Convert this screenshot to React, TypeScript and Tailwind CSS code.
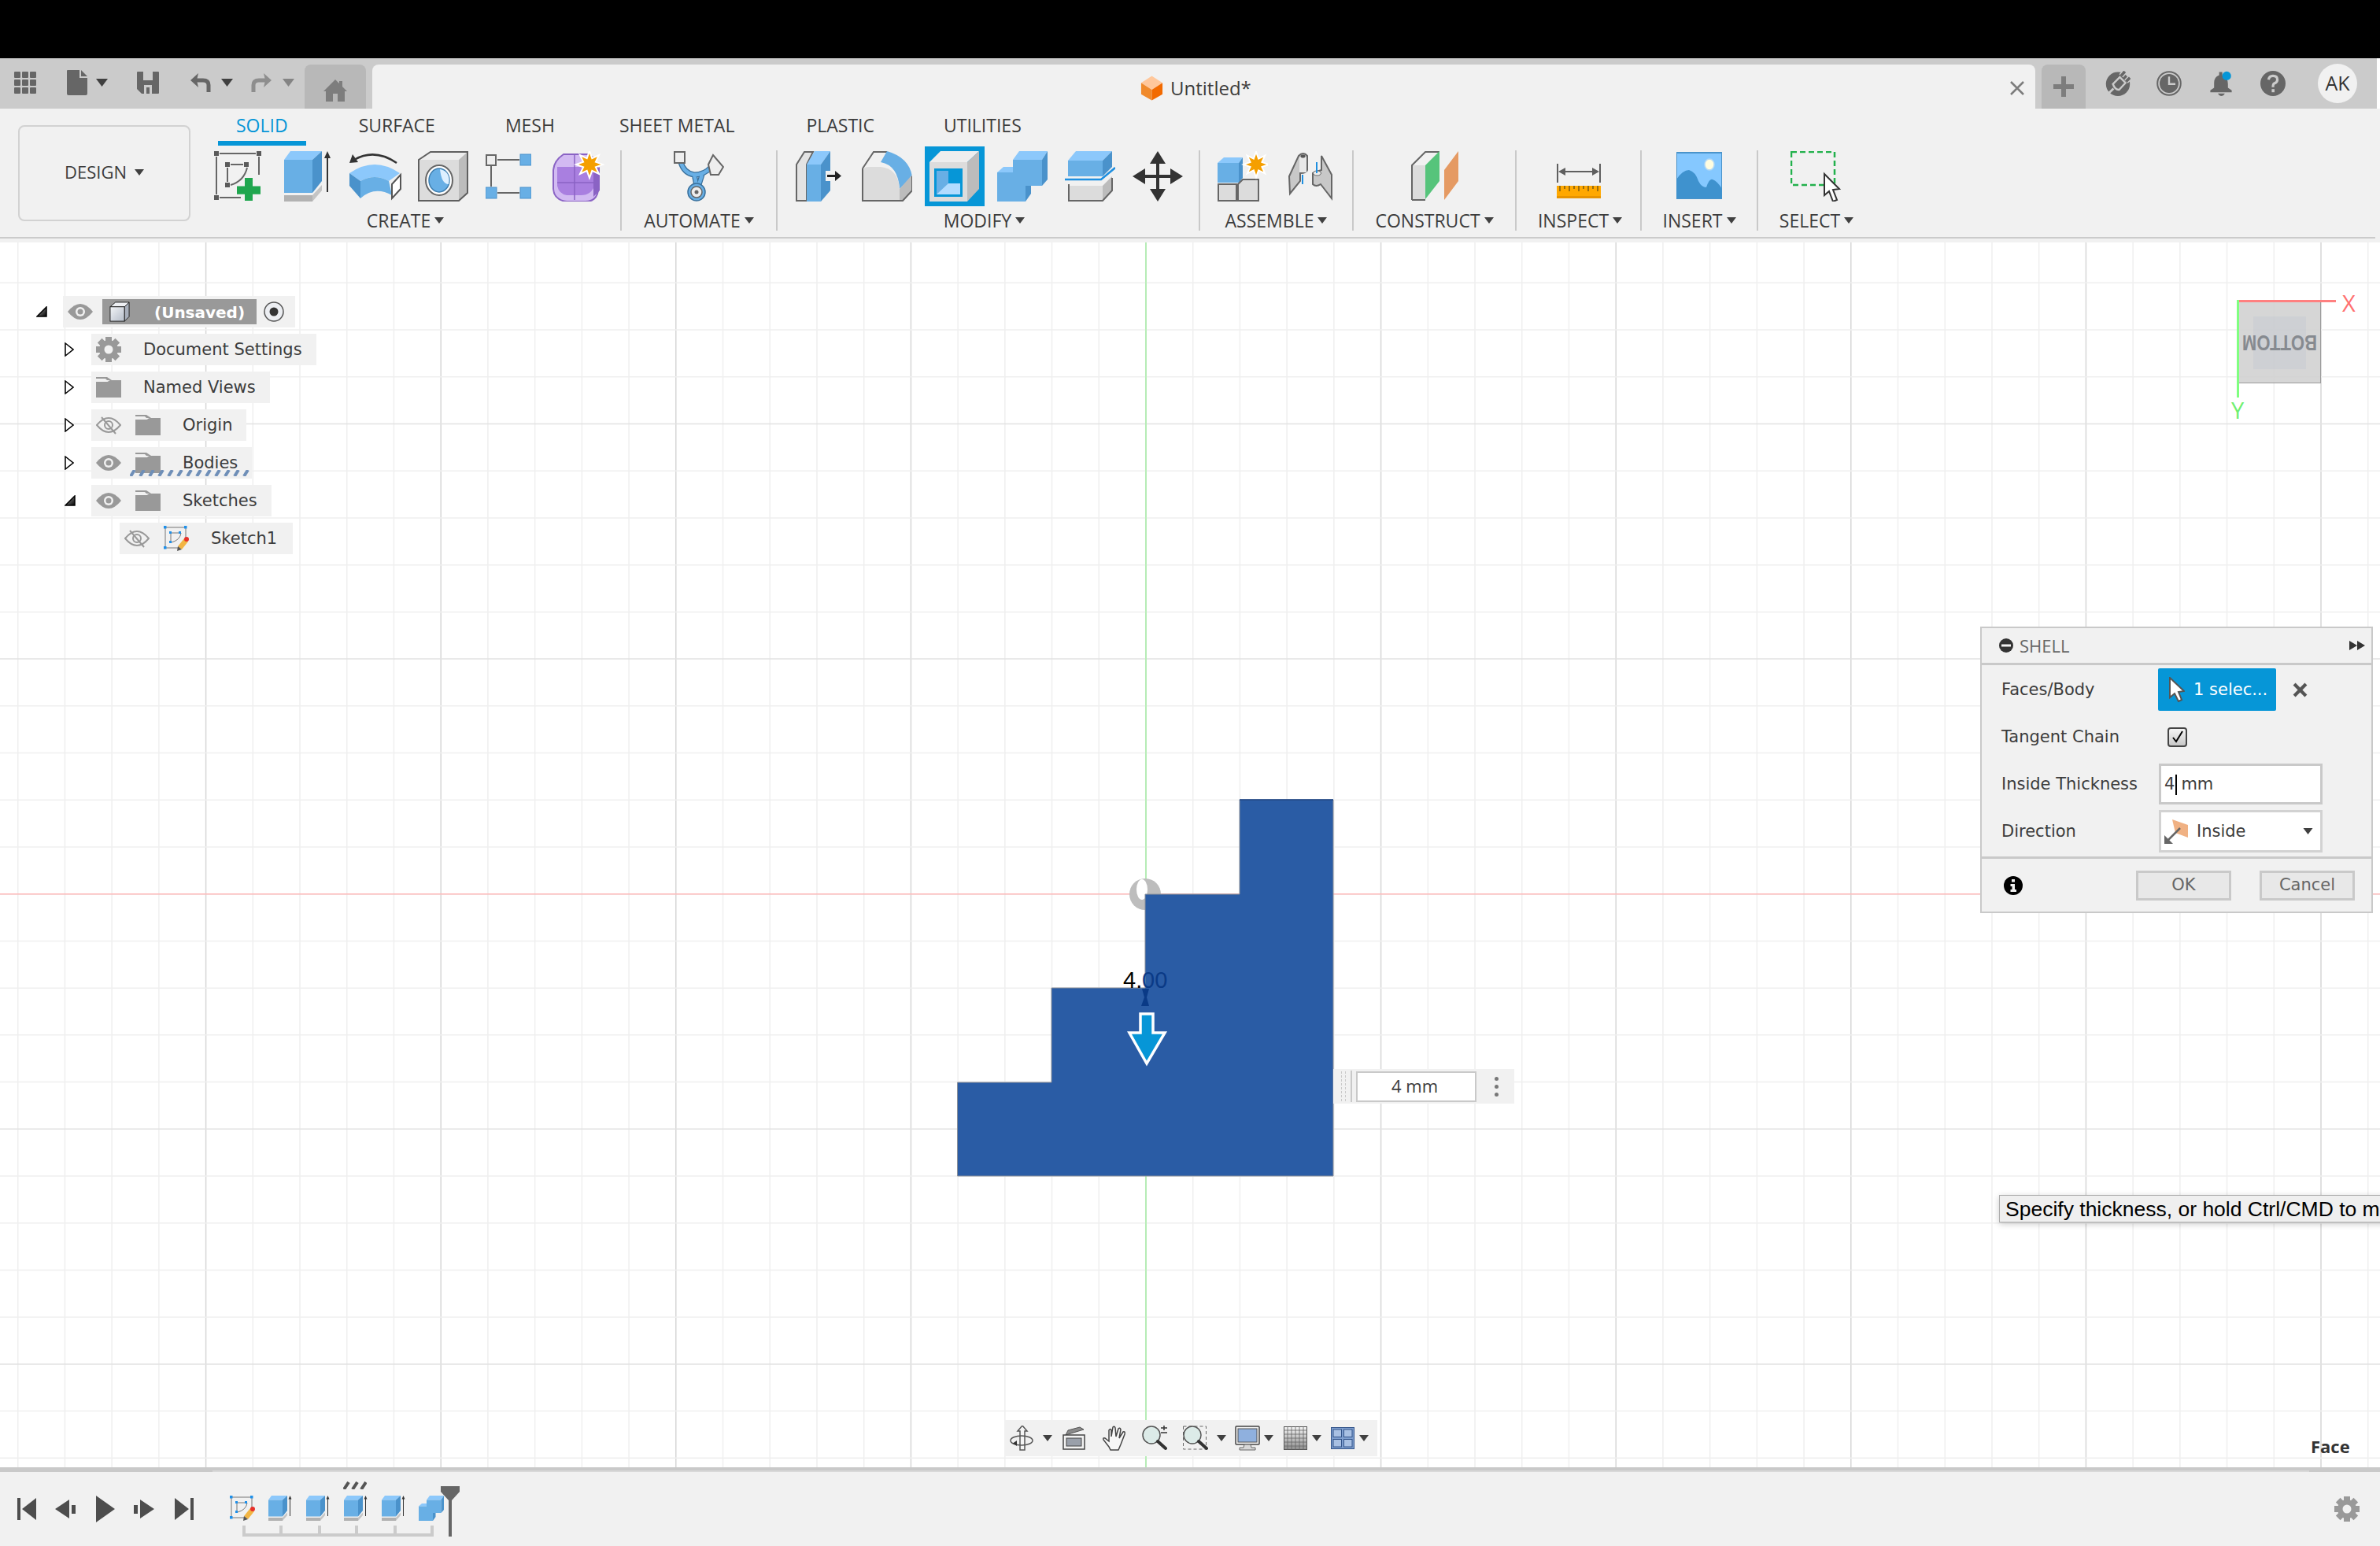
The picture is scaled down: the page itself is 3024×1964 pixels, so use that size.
import React from 'react';

type IconProps = { className?: string };

const BLUE = '#68afe5';
const BLUE_TOP = '#8cc8fb';
const BLUE_SIDE = '#4a92cb';

const Caret = ({ className = 'w-[12px] h-[8px]' }: IconProps) => (
  <svg viewBox="0 0 12 8" className={className}>
    <path d="M0 0H12L6 8Z" fill="#404040" />
  </svg>
);

/* ---------- quick access bar ---------- */
const GridIcon = () => (
  <svg viewBox="0 0 28 28" className="w-[28px] h-[28px]" fill="#666">
    {[0, 10, 20].map((y) =>
      [0, 10, 20].map((x) => <rect key={`${x}-${y}`} x={x} y={y} width="8" height="8" rx="1" />)
    )}
  </svg>
);
const FileIcon = () => (
  <svg viewBox="0 0 26 32" className="w-[26px] h-[32px]">
    <path d="M1 0H16V10H26V30Q26 32 24 32H2Q0 32 0 30V1Q0 0 1 0ZM18 0L26 8H18Z" fill="#666" />
  </svg>
);
const SaveIcon = () => (
  <svg viewBox="0 0 28 28" className="w-[28px] h-[28px]">
    <path d="M1 0H27Q28 0 28 1V27Q28 28 27 28H6L0 22V1Q0 0 1 0Z" fill="#666" />
    <path d="M8 0H20V11H8ZM9 17H19V28H9Z" fill="#cbcbcb" />
    <rect x="12" y="20" width="4" height="8" fill="#666" />
    <rect x="10" y="0" width="8" height="9" fill="#cbcbcb" />
  </svg>
);
const UndoIcon = ({ color = '#666', flip = false }: { color?: string; flip?: boolean }) => (
  <svg viewBox="0 0 27 24" className={`w-[27px] h-[24px] ${flip ? '-scale-x-100' : ''}`}>
    <path d="M24 24V15Q24 9 17 9H8" fill="none" stroke={color} strokeWidth="5" />
    <path d="M11 0L1 9L11 18L9 9Z" fill={color} />
  </svg>
);
const HomeIcon = () => (
  <svg viewBox="0 0 30 28" className="w-[30px] h-[28px]">
    <path d="M15 0L20 5V2H24V9L30 15H27V28H18V18H12V28H3V15H0Z" fill="#7d7d7d" />
  </svg>
);
const PlugIcon = () => (
  <svg viewBox="0 0 40 40" className="w-[32px] h-[32px]">
    <circle cx="20" cy="21" r="19" fill="#666" />
    <path d="M25 8L31 1M33 17L39 11" stroke="#cbcbcb" strokeWidth="8" />
    <path d="M25 8L31 1M33 17L39 11" stroke="#666" strokeWidth="4.500" />
    <path d="M12 21L23 10L32 19L22 30Q16 31 12 21Z" fill="#666" stroke="#cbcbcb" strokeWidth="3" />
    <path d="M13 28L5 36" stroke="#cbcbcb" strokeWidth="3.500" />
  </svg>
);
const ClockIcon = () => (
  <svg viewBox="0 0 40 40" className="w-[32px] h-[32px]">
    <circle cx="20" cy="20" r="18.500" fill="none" stroke="#666" strokeWidth="2.500" />
    <circle cx="20" cy="20" r="15" fill="#666" />
    <path d="M20 9V21H30" fill="none" stroke="#cbcbcb" strokeWidth="3" />
  </svg>
);
const BellIcon = () => (
  <svg viewBox="0 0 40 40" className="w-[32px] h-[32px]">
    <path d="M17 2H22V7Q31 11 31 21V27L37 31V34H3V31L9 27V19Q9 10 17 7Z" fill="#666" />
    <path d="M15 36H26Q24 40 20 40Q17 40 15 36Z" fill="#666" />
    <circle cx="29" cy="8" r="7" fill="#0696d7" />
  </svg>
);
const HelpIcon = () => (
  <svg viewBox="0 0 40 40" className="w-[32px] h-[32px]">
    <circle cx="20" cy="20" r="20" fill="#666" />
    <path d="M13 14Q14 8 20 8Q27 8 27 14Q27 18 22 20Q20 21 20 26" fill="none" stroke="#cbcbcb" strokeWidth="4" />
    <rect x="18" y="29" width="4.500" height="5" fill="#cbcbcb" />
  </svg>
);
const DocCube = () => (
  <svg viewBox="0 0 30 32" className="w-[29px] h-[32px]">
    <path d="M15 0L29 9L15 18L1 9Z" fill="#ffc79b" />
    <path d="M1 9L15 18V32L1 24Z" fill="#f08a2c" />
    <path d="M29 9L15 18V32L29 24Z" fill="#f26a00" />
  </svg>
);

/* ---------- ribbon icons, every one drawn in a 64 box ---------- */
const SketchPlus = () => (
  <svg viewBox="0 0 66 64" className="w-[66px] h-[64px]">
    <g fill="#5a5a5a">
      <rect x="0" y="0" width="6" height="6" />
      <rect x="54" y="0" width="6" height="6" />
      <rect x="0" y="56" width="6" height="6" />
      <rect x="14" y="14" width="6" height="6" />
      <rect x="38" y="14" width="6" height="6" />
      <rect x="14" y="40" width="6" height="6" />
    </g>
    <path d="M7 3H53M3 7V55M7 59H34M57 7V30M21 17H37M17 21V39" stroke="#666" strokeWidth="2" fill="none" />
    <path d="M42 21Q38 38 21 43" stroke="#666" strokeWidth="2" fill="none" />
    <path d="M37 36H47V46H57V56H47V64H37V56H27V46H37Z" fill="#1fa64e" transform="translate(2 -3) scale(1 1.03)" />
  </svg>
);
const Extrude = ({ className = 'w-[64px] h-[64px]' }: IconProps) => (
  <svg viewBox="0 0 64 64" className={className}>
    <path d="M2 11L10 0H50L38 11Z" fill={BLUE_TOP} />
    <rect x="2" y="11" width="36" height="42" fill={BLUE} />
    <path d="M38 11L50 0V38L38 53Z" fill={BLUE_SIDE} />
    <path d="M2 56H38V64H2Z" fill="#b2b2b2" />
    <path d="M38 56L50 43V50L38 64Z" fill="#c4c4c4" />
    <path d="M57 8V52" stroke="#333" strokeWidth="2" />
    <path d="M53 9L57 0L61 9Z" fill="#333" />
  </svg>
);
const Revolve = () => (
  <svg viewBox="0 0 66 64" className="w-[66px] h-[64px]">
    <path d="M60 15Q32 -4 6 11" fill="none" stroke="#333" strokeWidth="2.500" />
    <path d="M0 15L4 4L11 14Z" fill="#333" />
    <path d="M0 28Q32 6 64 28L50 38Q32 28 14 38Z" fill={BLUE_TOP} />
    <path d="M14 38Q32 28 50 38L54 56Q32 44 14 60Z" fill={BLUE} />
    <path d="M0 28L14 38V60L0 44Z" fill={BLUE_SIDE} />
    <path d="M54 42L65 30V48L54 60Z" fill="#fff" stroke="#555" strokeWidth="2" />
  </svg>
);
const Hole = () => (
  <svg viewBox="0 0 64 64" className="w-[64px] h-[64px]">
    <path d="M1 11L16 1H63L52 11Z" fill="#eee" />
    <rect x="1" y="11" width="51" height="52" fill="#dcdcdc" />
    <path d="M52 11L63 1V53L52 63Z" fill="#bcbcbc" />
    <path d="M1 11L16 1H63V53L52 63H1Z" fill="none" stroke="#5f5f5f" strokeWidth="2" />
    <ellipse cx="27" cy="37" rx="17" ry="19" fill="#fff" stroke="#666" strokeWidth="2" />
    <ellipse cx="27" cy="37" rx="13" ry="15" fill={BLUE} stroke="#3f7fb0" strokeWidth="1.500" />
    <path d="M28 23Q42 26 39 42Q30 42 28 23Z" fill="#dff0ff" />
  </svg>
);
const Pattern = () => (
  <svg viewBox="0 0 58 64" className="w-[58px] h-[64px] -ml-[6px]">
    <path d="M15 11H43M15 53H43M7 19V45" stroke="#666" strokeWidth="2" />
    <rect x="1" y="5" width="12" height="13" fill="#eee" stroke="#666" strokeWidth="2" />
    <rect x="44" y="4" width="14" height="14" fill={BLUE} stroke="#4a92cb" />
    <rect x="0" y="46" width="14" height="14" fill={BLUE} stroke="#4a92cb" />
    <rect x="44" y="46" width="14" height="14" fill={BLUE} stroke="#4a92cb" />
  </svg>
);
const Star = ({ cx, cy, r }: { cx: number; cy: number; r: number }) => {
  const pts = Array.from({ length: 16 }, (_, i) => {
    const a = (Math.PI * i) / 8;
    const d = i % 2 === 0 ? r : r * 0.5;
    return `${(cx + Math.sin(a) * d).toFixed(1)},${(cy - Math.cos(a) * d).toFixed(1)}`;
  }).join(' ');
  return <polygon points={pts} fill="#f59f00" stroke="#fff" strokeWidth="2" />;
};
const Form = () => (
  <svg viewBox="0 0 66 64" className="w-[66px] h-[64px]">
    <path d="M14 4H44Q58 8 58 28V50Q56 64 42 64H18Q2 62 1 48V24Q2 12 14 4Z" fill="#d2baf2" stroke="#8a63c4" strokeWidth="2" />
    <path d="M6 20H50Q54 30 54 42Q50 56 36 56H18Q8 54 6 44Z" fill="#a97fe0" />
    <path d="M52 26L60 20V50L52 58Z" fill="#8a63c4" />
    <path d="M6 40H52M28 4V62" stroke="#8a63c4" strokeWidth="1.500" fill="none" />
    <Star cx={47} cy={17} r={17} />
  </svg>
);
const Automate = () => (
  <svg viewBox="0 0 64 64" className="w-[64px] h-[64px]">
    <path d="M9 14Q13 28 26 30Q39 30 48 20M26 30Q30 44 29 54M36 30Q32 42 29 54" fill="none" stroke="#39709c" strokeWidth="7" />
    <path d="M9 14Q13 28 26 30Q39 30 48 20M26 30Q30 44 29 54M36 30Q32 42 29 54" fill="none" stroke={BLUE} strokeWidth="4.500" />
    <rect x="1" y="1" width="13" height="14" fill="#eee" stroke="#666" strokeWidth="2" />
    <path d="M50 5L63 20L57 30L47 30L44 17Z" fill="#eee" stroke="#666" strokeWidth="2" />
    <circle cx="29" cy="52" r="11" fill={BLUE} stroke="#39709c" strokeWidth="1.500" />
    <circle cx="29" cy="52" r="7" fill="#eee" stroke="#666" strokeWidth="1.500" />
    <circle cx="29" cy="52" r="2.500" fill="#666" />
  </svg>
);
const PressPull = () => (
  <svg viewBox="0 0 60 64" className="w-[60px] h-[64px]">
    <path d="M1 17L11 1H22L14 17V63H1Z" fill="#e3e3e3" stroke="#666" strokeWidth="2" />
    <path d="M14 17L24 0H44L32 17Z" fill={BLUE_TOP} />
    <rect x="14" y="17" width="18" height="47" fill={BLUE} />
    <path d="M32 17L44 0V50L32 64Z" fill={BLUE_SIDE} />
    <rect x="38" y="25" width="20" height="13" fill="#f1f1f1" />
    <path d="M40 31.500H52" stroke="#222" strokeWidth="3" />
    <path d="M50 25L58 31.500L50 38Z" fill="#222" />
  </svg>
);
const Fillet = () => (
  <svg viewBox="0 0 64 64" className="w-[64px] h-[64px]">
    <path d="M1 22L15 1H32" fill="none" stroke="#666" strokeWidth="2" />
    <path d="M24 14L32 0Q60 8 64 32L48 48Q46 18 24 14Z" fill={BLUE} />
    <path d="M1 63V24Q2 20 10 20H24Q46 22 48 48V63Z" fill="#dcdcdc" />
    <path d="M48 48L64 30V50L52 63H48Z" fill="#bcbcbc" />
    <path d="M1 22V63H52L64 50V32" fill="none" stroke="#666" strokeWidth="2" />
  </svg>
);
const Shell = () => (
  <svg viewBox="0 0 76 76" className="w-[76px] h-[76px] -my-[6px]">
    <rect width="76" height="76" fill="#0696d7" />
    <path d="M6 20L20 6H69L54 20Z" fill="#eee" />
    <rect x="6" y="20" width="48" height="50" fill="#dcdcdc" />
    <path d="M54 20L69 6V54L54 70Z" fill="#bcbcbc" />
    <rect x="12" y="28" width="36" height="36" fill="#0696d7" />
    <rect x="15" y="31" width="15" height="30" fill={BLUE} />
    <path d="M15 61L30 47H45V61Z" fill="#b2dcff" />
  </svg>
);
const Combine = ({ className = 'w-[64px] h-[64px]' }: IconProps) => (
  <svg viewBox="0 0 64 64" className={className}>
    <path d="M20 11L28 0H64L57 11Z" fill={BLUE_TOP} />
    <rect x="20" y="11" width="37" height="33" fill={BLUE} />
    <path d="M57 11L64 0V36L57 44Z" fill={BLUE_SIDE} />
    <path d="M0 27L8 20H20V27Z" fill={BLUE_TOP} />
    <rect x="0" y="27" width="36" height="37" fill={BLUE} />
    <path d="M36 44H43V54L36 64Z" fill={BLUE_SIDE} />
  </svg>
);
const Split = () => (
  <svg viewBox="0 0 64 64" className="w-[64px] h-[64px]">
    <path d="M4 12L14 0H60L48 12Z" fill={BLUE_TOP} />
    <rect x="4" y="12" width="44" height="20" fill={BLUE} />
    <path d="M48 12L60 0V20L48 32Z" fill={BLUE_SIDE} />
    <path d="M0 36H46L64 21" fill="none" stroke="#1e8fe0" strokeWidth="2.500" />
    <rect x="5" y="44" width="43" height="18" fill="#dcdcdc" />
    <path d="M48 44L60 32V50L48 62Z" fill="#bcbcbc" />
    <path d="M5 42V63H48L60 50V34" fill="none" stroke="#666" strokeWidth="2" />
  </svg>
);
const Move = () => (
  <svg viewBox="0 0 64 64" className="w-[64px] h-[64px]">
    <path d="M30 14H34V30H50V34H34V50H30V34H14V30H30Z" fill="#333" />
    <path d="M32 0L42 16H22ZM32 64L22 48H42ZM0 32L16 22V42ZM64 32L48 42V22Z" fill="#333" />
  </svg>
);
const Assemble = () => (
  <svg viewBox="0 0 64 64" className="w-[64px] h-[64px]">
    <path d="M0 15L8 8H32L27 15Z" fill={BLUE_TOP} />
    <rect x="0" y="15" width="27" height="25" fill={BLUE} />
    <path d="M27 15L32 8V34L27 40Z" fill={BLUE_SIDE} />
    <path d="M1 42H24V63H1ZM26 42L32 36H52V63H26Z" fill="#dcdcdc" stroke="#666" strokeWidth="2" />
    <Star cx={49} cy={17} r={16} />
  </svg>
);
const Joint = () => (
  <svg viewBox="0 0 58 64" className="w-[58px] h-[64px]">
    <path d="M2 32L14 6Q20 0 25 6V24Q24 28 16 28V38L3 54Z" fill="#c8c8c8" stroke="#666" strokeWidth="2" />
    <path d="M15 8Q20 4 24 8V27H15Z" fill="#e8e8e8" />
    <ellipse cx="19.500" cy="6.500" rx="3" ry="2" fill="#555" />
    <path d="M56 30L43 6V24Q36 26 32 28V42Q36 46 42 42L56 60Z" fill="#c8c8c8" stroke="#666" strokeWidth="2" />
    <ellipse cx="37.500" cy="28" rx="5" ry="3" fill="#eee" stroke="#666" />
    <path d="M19 30V42M37 14V28" stroke="#1e8fe0" strokeWidth="2" />
  </svg>
);
const Construct = () => (
  <svg viewBox="0 0 60 64" className="w-[60px] h-[64px]">
    <path d="M1 18H18V61H1Z" fill="#dcdcdc" />
    <path d="M1 62V18L18 1H36" fill="none" stroke="#666" strokeWidth="2" />
    <path d="M1 62H18" stroke="#666" strokeWidth="2" />
    <path d="M18 61L36 38V0L18 18Z" fill="#56c47b" />
    <path d="M42 62L60 38V0L42 24Z" fill="#e59a63" />
  </svg>
);
const Inspect = () => (
  <svg viewBox="0 0 56 64" className="w-[56px] h-[64px]">
    <path d="M1 16V40M55 16V40M8 26H48" stroke="#5f5f5f" strokeWidth="2" />
    <path d="M2 26L11 21V31ZM54 26L45 21V31Z" fill="#5f5f5f" />
    <rect x="0" y="44" width="56" height="16" fill="#ffa800" />
    <rect x="0" y="57" width="56" height="3" fill="#e89400" />
    <path d="M4 44V51M10 44V48M16 44V51M22 44V48M28 44V51M34 44V48M40 44V51M46 44V48M52 44V51" stroke="#7a5a10" strokeWidth="1.500" />
  </svg>
);
const Insert = () => (
  <svg viewBox="0 0 58 64" className="w-[58px] h-[64px]">
    <rect x="0" y="2" width="58" height="58" fill="#85c8ff" stroke="#4a94cb" strokeWidth="2" />
    <path d="M0 60V36Q8 24 16 24Q24 26 28 38Q32 46 38 46Q42 34 46 36Q52 38 58 48V60Z" fill="#3f92ce" />
    <ellipse cx="42" cy="17" rx="6" ry="7" fill="#fffde0" stroke="#b5d9f5" strokeWidth="1.500" />
  </svg>
);
const Select = () => (
  <svg viewBox="0 0 66 64" className="w-[66px] h-[64px]">
    <rect x="1" y="1" width="55" height="42" fill="none" stroke="#22b14c" strokeWidth="2.500" strokeDasharray="7 4" />
    <path d="M43 29V56L49 51L54 64L59 62L54 49L62 48Z" fill="#fff" stroke="#333" strokeWidth="2" />
  </svg>
);

/* ---------- browser tree ---------- */
const Eye = () => (
  <svg viewBox="0 0 32 20" className="w-[32px] h-[20px] shrink-0">
    <path d="M0 10Q16 -10 32 10Q16 30 0 10Z" fill="#999" />
    <circle cx="16" cy="10" r="6" fill="#f1f1f1" />
    <circle cx="16" cy="10" r="3.500" fill="#999" />
  </svg>
);
const EyeOff = () => (
  <svg viewBox="0 0 32 24" className="w-[32px] h-[24px] shrink-0">
    <path d="M1 12Q16 -6 31 12Q16 30 1 12Z" fill="none" stroke="#999" strokeWidth="2" />
    <circle cx="16" cy="12" r="5" fill="none" stroke="#999" strokeWidth="2" />
    <path d="M7 2L25 23" stroke="#999" strokeWidth="2" />
  </svg>
);
const Folder = () => (
  <svg viewBox="0 0 32 26" className="w-[32px] h-[26px] shrink-0">
    <path d="M0 0H14L20 4H32V26H0ZM0 6H14L18 4H14L12 2H0Z" fill="#999" />
    <path d="M0 4H12L16 6H0Z" fill="#f1f1f1" />
  </svg>
);
const Gear = ({ color = '#999', bg = '#f1f1f1' }: { color?: string; bg?: string }) => (
  <svg viewBox="0 0 32 32" className="w-[32px] h-[32px] shrink-0">
    {[0, 45, 90, 135].map((a) => (
      <rect key={a} x="12" y="0" width="8" height="32" fill={color} transform={`rotate(${a} 16 16)`} />
    ))}
    <circle cx="16" cy="16" r="12" fill={color} />
    <circle cx="16" cy="16" r="5.500" fill={bg} />
  </svg>
);
const TriOpen = () => (
  <svg viewBox="0 0 14 14" className="w-[14px] h-[14px]">
    <defs>
      <linearGradient id="tri" x1="0" y1="0" x2="1" y2="1">
        <stop offset="0" stopColor="#aaa" />
        <stop offset="1" stopColor="#000" />
      </linearGradient>
    </defs>
    <path d="M13 1V13H1Z" fill="url(#tri)" stroke="#000" strokeWidth="1.500" />
  </svg>
);
const TriClosed = () => (
  <svg viewBox="0 0 12 18" className="w-[12px] h-[18px]">
    <path d="M1 1L11 9L1 17Z" fill="#fff" stroke="#000" strokeWidth="1.500" />
  </svg>
);
const SketchPencil = ({ className = 'w-[32px] h-[32px]' }: IconProps) => (
  <svg viewBox="0 0 32 32" className={`${className} shrink-0`}>
    <path d="M2 2H28V16M2 2V28H20M9 9H20M9 9V20" fill="none" stroke="#777" strokeWidth="1" />
    <path d="M22 9Q21 18 10 21" fill="none" stroke="#777" strokeWidth="1" />
    <g fill="#1e90ea">
      <rect x="0" y="0" width="3.500" height="3.500" />
      <rect x="26" y="0" width="3.500" height="3.500" />
      <rect x="0" y="26" width="3.500" height="3.500" />
      <rect x="7" y="7" width="3" height="3" />
      <rect x="19" y="7" width="3" height="3" />
      <rect x="7" y="19" width="3" height="3" />
    </g>
    <path d="M18 26L26 16L31 20L23 30Z" fill="#f2b544" />
    <path d="M18 26L17 32L23 30Z" fill="#555" />
    <circle cx="29" cy="17" r="3" fill="#e8302a" />
  </svg>
);
const TreeCube = () => (
  <svg viewBox="0 0 28 28" className="w-[27px] h-[27px]">
    <defs>
      <linearGradient id="cube" x1="0" y1="0" x2="1" y2="1">
        <stop offset="0" stopColor="#f2f4f7" />
        <stop offset="1" stopColor="#b4bcc8" />
      </linearGradient>
    </defs>
    <path d="M1 7L8 1H26L20 7Z" fill="#eef0f4" stroke="#222" strokeWidth="1" />
    <rect x="1" y="7" width="19" height="19" fill="url(#cube)" stroke="#222" strokeWidth="1" />
    <path d="M20 7L26 1V20L20 26Z" fill="#a8afbb" stroke="#222" strokeWidth="1" />
  </svg>
);

const TreeRow = ({
  depth,
  open,
  closed,
  children,
  dashed,
}: {
  depth: number;
  open?: boolean;
  closed?: boolean;
  children: React.ReactNode;
  dashed?: boolean;
}) => (
  <div
    className={`flex items-center h-[40px] ${depth === 0 ? '' : depth === 1 ? 'ml-[36px]' : 'ml-[72px]'}`}
  >
    <div className="w-[35px] flex items-center pl-[1px]">
      {open && <TriOpen />}
      {closed && <TriClosed />}
    </div>
    <div className="relative flex items-center h-[40px] pl-[6px] pr-[18px] bg-[#f1f1f1]">
      {children}
      {dashed && (
        <svg viewBox="0 0 156 8" className="absolute left-[49px] top-[29px] w-[156px] h-[8px]">
          {Array.from({ length: 13 }, (_, i) => (
            <path key={i} d={`M${i * 12 + 1} 8L${i * 12 + 6} 0`} stroke="#6f8fb8" strokeWidth="4" />
          ))}
        </svg>
      )}
    </div>
  </div>
);

/* ---------- bottom navigation icons ---------- */
const Orbit = () => (
  <svg viewBox="0 0 32 32" className="w-[32px] h-[32px]">
    <path d="M16 0L22 7H19V31H13V7H10Z" fill="#f4f4f4" stroke="#555" strokeWidth="1.500" />
    <ellipse cx="15" cy="19" rx="14" ry="6" fill="none" stroke="#555" strokeWidth="1.500" />
    <path d="M9 19V26L4 22.500Z" fill="#333" />
  </svg>
);
const LookAt = () => (
  <svg viewBox="0 0 30 30" className="w-[30px] h-[30px]">
    <path d="M3 13L7 5L22 1L27 4L4 11Z" fill="#8a8a8a" stroke="#555" />
    <rect x="1" y="11" width="27" height="18" fill="#f2f2f2" stroke="#444" strokeWidth="1.500" />
    <rect x="5" y="15" width="19" height="10" fill="#9aa0aa" stroke="#444" />
  </svg>
);
const Hand = () => (
  <svg viewBox="0 0 32 32" className="w-[32px] h-[32px]">
    <path
      d="M9 27L2 18Q1 15 4 16L9 20V6Q11 3 12 6V14L14 2Q16 0 17 3L18 14L21 4Q23 2 24 5L22 16L27 8Q30 7 29 11L24 24L21 31H11Z"
      fill="#f7f7f7"
      stroke="#444"
      strokeWidth="1.500"
    />
  </svg>
);
const Magnifier = () => (
  <>
    <circle cx="12" cy="12" r="11" fill="#dcebe8" stroke="#555" strokeWidth="1.500" />
    <path d="M20 20L30 29" stroke="#333" strokeWidth="4" strokeLinecap="round" />
  </>
);
const ZoomIcon = () => (
  <svg viewBox="0 0 32 32" className="w-[32px] h-[32px]">
    <Magnifier />
    <path d="M24 3H32M28 0V6M24 9H32" stroke="#333" strokeWidth="1.500" />
  </svg>
);
const FitIcon = () => (
  <svg viewBox="0 0 32 32" className="w-[32px] h-[32px]">
    <rect x="0.500" y="1" width="29" height="29" fill="none" stroke="#666" strokeDasharray="4 3" />
    <Magnifier />
  </svg>
);
const Display = () => (
  <svg viewBox="0 0 32 32" className="w-[32px] h-[32px]">
    <rect x="1" y="1" width="30" height="23" rx="1" fill="#f2f2f2" stroke="#444" strokeWidth="1.500" />
    <rect x="4" y="4" width="24" height="17" fill="#8fb0de" stroke="#555" />
    <path d="M12 24H20L21 28H26V31H6V28H11Z" fill="#d8d8d8" stroke="#666" />
  </svg>
);
const GridNav = () => {
  const ticks = [5, 10, 15, 20, 25];
  return (
    <svg viewBox="0 0 30 30" className="w-[30px] h-[30px]">
      <defs>
        <linearGradient id="gridfade" x1="0" y1="0" x2="0" y2="1">
          <stop offset="0" stopColor="#f5f5f5" />
          <stop offset="1" stopColor="#8f8f8f" />
        </linearGradient>
      </defs>
      <rect x="0.500" y="0.500" width="29" height="29" fill="url(#gridfade)" stroke="#555" />
      {ticks.map((t) => (
        <g key={t} stroke="#666" strokeWidth="0.800">
          <path d={`M${t} 0V30`} />
          <path d={`M0 ${t}H30`} />
        </g>
      ))}
    </svg>
  );
};
const Viewports = () => (
  <svg viewBox="0 0 30 28" className="w-[30px] h-[28px]">
    <rect x="0.500" y="0.500" width="29" height="27" fill="#7f9fcf" stroke="#33548a" />
    <rect x="3" y="3" width="10.500" height="9.500" fill="#a8c0e3" stroke="#33548a" />
    <rect x="16.500" y="3" width="10.500" height="9.500" fill="#a8c0e3" stroke="#33548a" />
    <rect x="3" y="15.500" width="10.500" height="9.500" fill="#a8c0e3" stroke="#33548a" />
    <rect x="16.500" y="15.500" width="10.500" height="9.500" fill="#a8c0e3" stroke="#33548a" />
  </svg>
);

/* ---------- canvas drawing ---------- */
const CanvasDrawing = () => {
  const steps = Array.from({ length: 60 }, (_, i) => i - 30);
  return (
    <svg viewBox="0 308 3024 1556" className="absolute inset-0 w-[3024px] h-[1556px]">
      {steps.map((k) => {
        const x = 1456 + 59.72 * k;
        const major = k % 5 === 0;
        return <line key={`v${k}`} x1={x} x2={x} y1="308" y2="1864" stroke={major ? '#d6d6d6' : '#efefef'} strokeWidth="1.500" />;
      })}
      {steps.map((k) => {
        const y = 1135.7 + 59.72 * k;
        const major = k % 5 === 0;
        return <line key={`h${k}`} x1="0" x2="3024" y1={y} y2={y} stroke={major ? '#e2e2e2' : '#efefef'} strokeWidth="1.500" />;
      })}
      <line x1="0" x2="3024" y1="1135.700" y2="1135.700" stroke="#ffb8b8" strokeWidth="1.500" />
      <line x1="1456" x2="1456" y1="308" y2="1864" stroke="#a8f0a8" strokeWidth="1.500" />
      <circle cx="1455" cy="1136" r="20" fill="#bdbdbd" />
      <ellipse cx="1451" cy="1130" rx="7" ry="13" fill="#fff" />
      <path
        d="M1575 1016H1694V1494H1216.500V1375H1336V1255H1455V1136H1575Z"
        fill="#2a5ca5"
        stroke="#8a8f98"
        strokeWidth="1"
      />
      <path d="M1575 1016H1694" stroke="#143f85" strokeWidth="1.500" />
      <text x="1427" y="1255" fontFamily="Liberation Sans" fontSize="29" fill="#000">4.</text>
      <text x="1451" y="1255" fontFamily="Liberation Sans" fontSize="29" fill="#0a3a86">00</text>
      <path d="M1451 1256H1460L1457 1267L1460 1278H1450L1454 1267Z" fill="#0a3a86" />
      <path
        d="M1449 1288H1465V1312H1480L1457 1351L1435 1312H1449Z"
        fill="#0696d7"
        stroke="#fff"
        strokeWidth="3.500"
      />
    </svg>
  );
};

const App = () => {
  return (
    <div className="w-[3024px] h-[1964px] flex flex-col overflow-hidden bg-white font-['Open_Sans',sans-serif] text-[#3c3c3c]">
      <div className="h-[74px] bg-black" />

      {/* Quick access + document tabs */}
      <div className="h-[64px] mr-[4px] flex bg-[#cbcbcb]">
        <div className="flex items-center pl-[18px] pb-[2px]">
          <GridIcon />
          <div className="ml-[39px]"><FileIcon /></div>
          <Caret className="ml-[11px] w-[15px] h-[10px]" />
          <div className="ml-[37px]"><SaveIcon /></div>
          <div className="ml-[39px]"><UndoIcon /></div>
          <Caret className="ml-[13px] w-[15px] h-[10px]" />
          <div className="ml-[23px]"><UndoIcon color="#8e8e8e" flip /></div>
          <Caret className="ml-[13px] w-[15px] h-[10px] opacity-50" />
        </div>
        <div className="ml-[13px] mt-[8px] w-[78px] rounded-t-lg bg-[#b8b8b8] flex items-center justify-center pt-[10px]">
          <HomeIcon />
        </div>
        <div className="ml-[8px] mt-[8px] flex-1 rounded-t-lg bg-[#f1f1f1] flex items-center pl-[976px] pr-[14px] pt-[3px]">
          <DocCube />
          <span className="ml-[9px] text-[24px] text-[#3c3c3c]">Untitled*</span>
          <svg viewBox="0 0 18 18" className="ml-auto w-[18px] h-[18px]">
            <path d="M1 1L17 17M17 1L1 17" stroke="#7d7d7d" strokeWidth="2.500" />
          </svg>
        </div>
        <div className="ml-[8px] mt-[8px] w-[56px] rounded-t-lg bg-[#b8b8b8] flex items-center justify-center">
          <svg viewBox="0 0 26 26" className="w-[26px] h-[26px]">
            <path d="M10 0H16V10H26V16H16V26H10V16H0V10H10Z" fill="#7d7d7d" />
          </svg>
        </div>
        <div className="flex items-center">
          <div className="ml-[25px]"><PlugIcon /></div>
          <div className="ml-[33px]"><ClockIcon /></div>
          <div className="ml-[34px]"><BellIcon /></div>
          <div className="ml-[34px]"><HelpIcon /></div>
          <div className="ml-[41px] mr-[25px] w-[50px] h-[50px] rounded-full bg-[#f1f1f1] flex items-center justify-center text-[25px] text-[#333]">
            AK
          </div>
        </div>
      </div>

      {/* Ribbon */}
      <div className="h-[170px] bg-[#f1f1f1] flex flex-col">
        <div className="h-[163px] flex">
          <div className="w-[252px] pl-[23px] pt-[21px]">
            <div className="w-[219px] h-[122px] rounded-lg border-2 border-[#d2d2d2] flex items-center justify-center gap-[10px] text-[22px] font-medium pb-[3px]">
              DESIGN
              <Caret />
            </div>
          </div>
          <div className="flex-1 flex flex-col">
            <div className="h-[47px] flex pl-[25px] gap-[45px] text-[23px]">
              <div className="h-[47px] px-[23px] pt-[4px] text-[#0696d7] border-b-[6px] border-[#0696d7]">SOLID</div>
              <div className="px-[22px] pt-[4px]">SURFACE</div>
              <div className="pl-[22px] pr-[15px] pt-[4px]">MESH</div>
              <div className="px-[22px] pt-[4px]">SHEET METAL</div>
              <div className="pl-[24px] pr-[21px] pt-[4px]">PLASTIC</div>
              <div className="px-[22px] pt-[4px]">UTILITIES</div>
            </div>
            <div className="flex">
              <Section width="w-[538px]" label="CREATE" labelClass="mr-[10px]">
                <Slot><SketchPlus /></Slot>
                <Slot><Extrude /></Slot>
                <Slot><Revolve /></Slot>
                <Slot><Hole /></Slot>
                <Slot><Pattern /></Slot>
                <Slot><Form /></Slot>
              </Section>
              <Section width="w-[198px]" label="AUTOMATE">
                <Slot><Automate /></Slot>
              </Section>
              <Section width="w-[537px]" label="MODIFY" labelClass="mr-[10px]">
                <Slot><PressPull /></Slot>
                <Slot><Fillet /></Slot>
                <Slot><Shell /></Slot>
                <Slot><Combine /></Slot>
                <Slot><Split /></Slot>
                <Slot><Move /></Slot>
              </Section>
              <Section width="w-[195px]" label="ASSEMBLE">
                <Slot><Assemble /></Slot>
                <Slot><Joint /></Slot>
              </Section>
              <Section width="w-[207px]" label="CONSTRUCT">
                <Slot><Construct /></Slot>
              </Section>
              <Section width="w-[159px]" label="INSPECT" labelClass="ml-[4px]">
                <Slot><Inspect /></Slot>
              </Section>
              <Section width="w-[148px]" label="INSERT">
                <Slot><Insert /></Slot>
              </Section>
              <Section width="w-[148px]" label="SELECT" last>
                <Slot><Select /></Slot>
              </Section>
            </div>
          </div>
        </div>
        <div className="h-[2px] mr-[6px] bg-[#cbcbcb]" />
      </div>

      {/* Canvas */}
      <div className="relative flex-1 overflow-hidden">
        <CanvasDrawing />

        {/* Browser tree */}
        <div className="absolute left-[45px] top-[68px] flex flex-col gap-[8px] font-['DejaVu_Sans',sans-serif] text-[21px] text-[#3c3c3c]">
          <TreeRow depth={0} open>
            <Eye />
            <div className="ml-[12px] w-[196px] h-[32px] bg-[#999] flex items-center pl-[9px] font-bold text-[20px] text-white">
              <TreeCube />
              <span className="ml-[30px] pt-[1px]">(Unsaved)</span>
            </div>
            <svg viewBox="0 0 26 26" className="ml-[9px] -mr-[4px] w-[26px] h-[26px]">
              <circle cx="13" cy="13" r="12" fill="#eceef2" stroke="#555" strokeWidth="1.500" />
              <circle cx="13" cy="13" r="5.500" fill="#333" />
            </svg>
          </TreeRow>
          <TreeRow depth={1} closed>
            <Gear />
            <span className="ml-[28px] pt-[2px]">Document Settings</span>
          </TreeRow>
          <TreeRow depth={1} closed>
            <Folder />
            <span className="ml-[28px] pt-[2px]">Named Views</span>
          </TreeRow>
          <TreeRow depth={1} closed>
            <EyeOff />
            <div className="ml-[18px]"><Folder /></div>
            <span className="ml-[28px] pt-[2px]">Origin</span>
          </TreeRow>
          <TreeRow depth={1} closed dashed>
            <Eye />
            <div className="ml-[18px]"><Folder /></div>
            <span className="ml-[28px] pt-[2px]">Bodies</span>
          </TreeRow>
          <TreeRow depth={1} open>
            <Eye />
            <div className="ml-[18px]"><Folder /></div>
            <span className="ml-[28px] pt-[2px]">Sketches</span>
          </TreeRow>
          <TreeRow depth={2}>
            <EyeOff />
            <div className="ml-[18px]"><SketchPencil /></div>
            <span className="ml-[28px] pr-[2px] pt-[2px]">Sketch1</span>
          </TreeRow>
        </div>

        {/* View cube */}
        <div className="absolute left-[2844px] top-[75px] w-[105px] h-[104px] bg-[#cfcfcf]/85 border-r border-b border-[#9a9a9a] flex items-center justify-center">
          <div className="absolute left-[19px] top-[19px] w-[67px] h-[67px] bg-[#c8ccd2]/60" />
          <span className="relative top-[1px] rotate-180 font-['Liberation_Sans',sans-serif] font-bold text-[22px] text-[#868a90] scale-y-125">
            BOTTOM
          </span>
          <div className="absolute -left-[1px] -top-[2px] w-[125px] h-[3px] bg-[#ff8080]" />
          <div className="absolute -left-[2px] -top-[2px] w-[3px] h-[124px] bg-[#80ff80]" />
          <span className="absolute left-[132px] -top-[20px] text-[29px] text-[#ff7070]">X</span>
          <span className="absolute -left-[9px] top-[116px] text-[29px] text-[#70f070]">Y</span>
        </div>

        {/* Shell dialog */}
        <div className="absolute left-[2516px] top-[488px] w-[499px] h-[364px] bg-[#f1f1f1] border-2 border-[#c9c9c9] flex flex-col font-['DejaVu_Sans',sans-serif] text-[21px] text-[#3c3c3c]">
          <div className="h-[47px] border-b-[3px] border-[#c9c9c9] flex items-center pl-[22px] pr-[8px] font-['Open_Sans',sans-serif] text-[22px] text-[#666]">
            <svg viewBox="0 0 18 18" className="w-[18px] h-[18px]">
              <circle cx="9" cy="9" r="9" fill="#333" />
              <rect x="3" y="7.500" width="12" height="3" fill="#f1f1f1" />
            </svg>
            <span className="ml-[8px]">SHELL</span>
            <svg viewBox="0 0 20 12" className="ml-auto w-[20px] h-[12px]">
              <path d="M0 0L10 6L0 12ZM10 0L20 6L10 12Z" fill="#333" />
            </svg>
          </div>
          <div className="flex-1 pl-[25px] pt-[1px]">
            <div className="h-[60px] flex items-center">
              <div className="w-[199px] pt-[2px]">Faces/Body</div>
              <div className="w-[150px] h-[54px] rounded-[2px] bg-[#0696d7] flex items-center pl-[14px] text-white">
                <svg viewBox="0 0 20 32" className="w-[20px] h-[32px]">
                  <path d="M1 1V26L7 21L12 31L16 29L12 19L19 18Z" fill="#fff" stroke="#555" strokeWidth="2" />
                </svg>
                <span className="ml-[11px] pt-[2px] whitespace-nowrap">1 selec...</span>
              </div>
              <svg viewBox="0 0 18 18" className="ml-[21px] w-[19px] h-[19px]">
                <path d="M2 2L16 16M16 2L2 16" stroke="#555" strokeWidth="4" />
              </svg>
            </div>
            <div className="h-[60px] flex items-center">
              <div className="w-[211px] pt-[2px]">Tangent Chain</div>
              <div className="w-[25px] h-[25px] rounded-[4px] border-2 border-[#444] bg-gradient-to-b from-[#f4f4f4] to-[#c8c8c8] flex items-center justify-center">
                <svg viewBox="0 0 18 18" className="w-[18px] h-[18px]">
                  <path d="M3 10L7 15L15 2" fill="none" stroke="#000" strokeWidth="2" />
                </svg>
              </div>
            </div>
            <div className="h-[60px] flex items-center">
              <div className="w-[200px] pt-[2px]">Inside Thickness</div>
              <div className="w-[208px] h-[52px] bg-white border-[3px] border-[#c9c9c9] flex items-center pl-[4px] pt-[2px]">
                4
                <span className="ml-[1px] mr-[5px] w-[2px] h-[26px] bg-black" />
                mm
              </div>
            </div>
            <div className="h-[60px] flex items-center">
              <div className="w-[200px] pt-[2px]">Direction</div>
              <div className="w-[208px] h-[54px] bg-white border-[3px] border-[#d2d2d2] flex items-center pl-[4px] pr-[9px]">
                <svg viewBox="0 0 32 32" className="w-[32px] h-[32px]">
                  <path d="M10 1L30 8V24L14 18Z" fill="#f0b183" />
                  <path d="M20 12L5 27" stroke="#666" strokeWidth="2.500" />
                  <path d="M0 32V21L11 32Z" fill="#666" />
                </svg>
                <span className="ml-[9px] pt-[2px]">Inside</span>
                <Caret className="ml-auto w-[13px] h-[8px]" />
              </div>
            </div>
          </div>
          <div className="h-[70px] border-t-[3px] border-[#c9c9c9] flex items-center pl-[28px] pr-[21px]">
            <svg viewBox="0 0 24 24" className="w-[24px] h-[24px]">
              <circle cx="12" cy="12" r="12" fill="#000" />
              <path d="M10 4H14V7.500H10ZM8.500 10H14V17H16V20H8.500V17H10.500V13H8.500Z" fill="#f1f1f1" />
            </svg>
            <div className="ml-auto w-[121px] h-[38px] bg-[#e8e8e8] border-[3px] border-[#c9c9c9] flex items-center justify-center text-[#666] text-[21px]">
              OK
            </div>
            <div className="ml-[36px] w-[121px] h-[38px] bg-[#e8e8e8] border-[3px] border-[#c9c9c9] flex items-center justify-center text-[#666] text-[21px]">
              Cancel
            </div>
          </div>
        </div>

        {/* Floating value box */}
        <div className="absolute left-[1694px] top-[1050px] w-[230px] h-[44px] bg-[#f1f1f1] flex items-center pl-[10px]">
          <div className="w-[6px] h-[38px] border-x border-dashed border-[#c9c9c9]" />
          <div className="ml-[6px] w-[2px] h-[40px] bg-[#c9c9c9]" />
          <div className="ml-[5px] w-[153px] h-[39px] bg-white border-2 border-[#c9c9c9] flex items-center justify-center text-[22px] pb-[2px] pr-[4px]">
            4 mm
          </div>
          <div className="ml-[23px] flex flex-col gap-[5px]">
            <div className="w-[5px] h-[5px] rounded-full bg-[#777]" />
            <div className="w-[5px] h-[5px] rounded-full bg-[#777]" />
            <div className="w-[5px] h-[5px] rounded-full bg-[#777]" />
          </div>
        </div>

        {/* Tooltip */}
        <div className="absolute left-[2540px] top-[1210px] w-[500px] h-[35px] pl-[7px] pt-[3px] flex items-center whitespace-nowrap bg-[#efefef] border border-[#aaa] shadow-[0_2px_8px_rgba(0,0,0,0.2)] font-['Liberation_Sans',sans-serif] text-[26.5px] text-black">
          Specify thickness, or hold Ctrl/CMD to m
        </div>

        {/* Navigation bar */}
        <div className="absolute left-[1276px] top-[1496px] w-[474px] h-[46px] bg-[#f1f1f1] flex items-center pl-[7px]">
          <Orbit />
          <Caret className="ml-[10px] w-[12px] h-[8px]" />
          <div className="ml-[13px]"><LookAt /></div>
          <div className="ml-[20px]"><Hand /></div>
          <div className="ml-[19px]"><ZoomIcon /></div>
          <div className="ml-[20px]"><FitIcon /></div>
          <Caret className="ml-[11px] w-[12px] h-[8px]" />
          <div className="ml-[11px]"><Display /></div>
          <Caret className="ml-[5px] w-[12px] h-[8px]" />
          <div className="ml-[13px]"><GridNav /></div>
          <Caret className="ml-[6px] w-[12px] h-[8px]" />
          <div className="ml-[12px]"><Viewports /></div>
          <Caret className="ml-[6px] w-[12px] h-[8px]" />
        </div>

        <span className="absolute left-[2936px] top-[1513px] font-bold text-[22px] text-[#333]">Face</span>
      </div>

      {/* Timeline */}
      <div className="h-[6px] bg-[#c9c9c9] flex flex-col">
        <div className="h-[4px]" />
        <div className="h-[2px] ml-[270px] mr-[90px] bg-[#d9d9d9]" />
      </div>
      <div className="h-[94px] bg-[#f1f1f1] flex items-center pl-[22px]">
        <svg viewBox="0 0 24 28" className="w-[24px] h-[28px]">
          <path d="M0 0H4V28H0ZM24 0V28L6 14Z" fill="#4d4d4d" />
        </svg>
        <svg viewBox="0 0 26 24" className="ml-[24px] w-[26px] h-[24px]">
          <path d="M0 12L18 0V24ZM21 7H26V18H21Z" fill="#4d4d4d" />
        </svg>
        <svg viewBox="0 0 24 34" className="ml-[26px] w-[24px] h-[34px]">
          <path d="M0 0L24 17L0 34Z" fill="#4d4d4d" />
        </svg>
        <svg viewBox="0 0 26 24" className="ml-[24px] w-[26px] h-[24px]">
          <path d="M0 7H5V18H0ZM8 0L26 12L8 24Z" fill="#4d4d4d" />
        </svg>
        <svg viewBox="0 0 24 28" className="ml-[26px] w-[24px] h-[28px]">
          <path d="M20 0H24V28H20ZM0 0L18 14L0 28Z" fill="#4d4d4d" />
        </svg>
        <div className="relative ml-[46px] self-start mt-[30px] flex flex-col">
          <div className="flex gap-[16px]">
            <SketchPencil />
            <Extrude className="w-[32px] h-[32px]" />
            <Extrude className="w-[32px] h-[32px]" />
            <Extrude className="w-[32px] h-[32px]" />
            <Extrude className="w-[32px] h-[32px]" />
            <Combine className="w-[32px] h-[32px]" />
          </div>
          <svg viewBox="0 0 244 14" className="ml-[16px] mt-[6px] w-[244px] h-[14px]">
            <path d="M0 0H4V10H47V0H51V10H96V0H100V10H143V0H147V10H192V0H196V10H239V0H243V14H0Z" fill="#cbcbcb" />
          </svg>
          <svg viewBox="0 0 30 10" className="absolute left-[144px] -top-[18px] w-[30px] h-[10px]">
            <path d="M1 10L7 1M12 10L18 1M23 10L29 1" stroke="#555" strokeWidth="4" />
          </svg>
          <svg viewBox="0 0 24 64" className="absolute left-[268px] -top-[12px] w-[24px] h-[64px]">
            <path d="M0 0H24V7L14 18V64H10V18L0 7Z" fill="#666" />
          </svg>
        </div>
        <div className="ml-auto mr-[26px]">
          <Gear bg="#f1f1f1" />
        </div>
      </div>
    </div>
  );
};

const Slot = ({ children }: { children: React.ReactNode }) => (
  <div className="w-[86px] h-[64px] flex items-start justify-center">{children}</div>
);

const Section = ({
  width,
  label,
  labelClass = '',
  last,
  children,
}: {
  width: string;
  label: string;
  labelClass?: string;
  last?: boolean;
  children: React.ReactNode;
}) => (
  <div
    className={`${width} mt-[6px] h-[102px] flex flex-col items-center ${last ? '' : 'border-r-2 border-[#c9c9c9]'}`}
  >
    <div className="mt-[1px] h-[64px] flex justify-center">{children}</div>
    <div className={`mt-[9px] h-[30px] flex items-center gap-[5px] text-[23px] ${labelClass}`}>
      {label}
      <Caret />
    </div>
  </div>
);

export default App;
